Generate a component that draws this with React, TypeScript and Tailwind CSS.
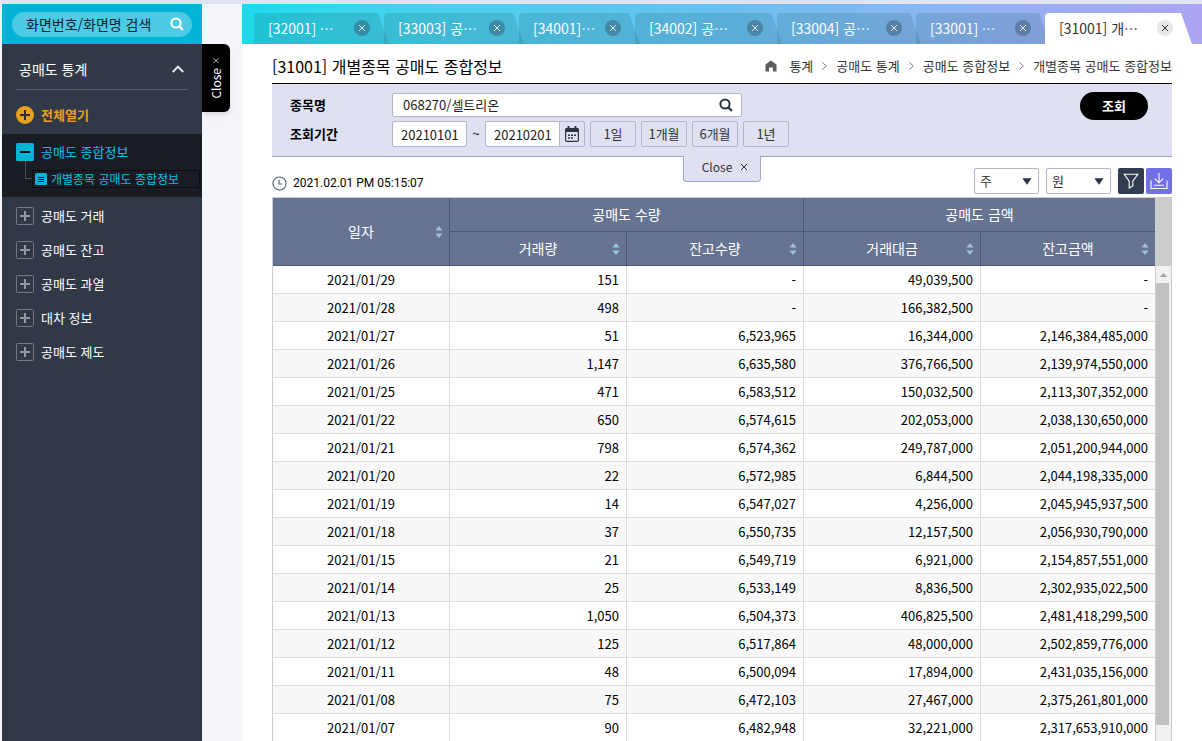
import { useState } from 'react';
import clsx from 'clsx';

interface ScreenTab {
  code: string;
  label: string;
  width: string;
}

const TABS: ScreenTab[] = [
  { code: '32001', label: '[32001] …', width: 'w-[130px]' },
  { code: '33003', label: '[33003] 공…', width: 'w-[135px]' },
  { code: '34001', label: '[34001]…', width: 'w-[116px]' },
  { code: '34002', label: '[34002] 공…', width: 'w-[142px]' },
  { code: '33004', label: '[33004] 공…', width: 'w-[139px]' },
  { code: '33001', label: '[33001] …', width: 'w-[129px]' },
  { code: '31001', label: '[31001] 개…', width: 'w-[142px]' },
];

const MENU = ['공매도 거래', '공매도 잔고', '공매도 과열', '대차 정보', '공매도 제도'];
const CRUMBS = ['통계', '공매도 통계', '공매도 종합정보', '개별종목 공매도 종합정보'];
const PERIODS = ['1일', '1개월', '6개월', '1년'];

const ROWS = [
  ['2021/01/29', '151', '-', '49,039,500', '-'],
  ['2021/01/28', '498', '-', '166,382,500', '-'],
  ['2021/01/27', '51', '6,523,965', '16,344,000', '2,146,384,485,000'],
  ['2021/01/26', '1,147', '6,635,580', '376,766,500', '2,139,974,550,000'],
  ['2021/01/25', '471', '6,583,512', '150,032,500', '2,113,307,352,000'],
  ['2021/01/22', '650', '6,574,615', '202,053,000', '2,038,130,650,000'],
  ['2021/01/21', '798', '6,574,362', '249,787,000', '2,051,200,944,000'],
  ['2021/01/20', '22', '6,572,985', '6,844,500', '2,044,198,335,000'],
  ['2021/01/19', '14', '6,547,027', '4,256,000', '2,045,945,937,500'],
  ['2021/01/18', '37', '6,550,735', '12,157,500', '2,056,930,790,000'],
  ['2021/01/15', '21', '6,549,719', '6,921,000', '2,154,857,551,000'],
  ['2021/01/14', '25', '6,533,149', '8,836,500', '2,302,935,022,500'],
  ['2021/01/13', '1,050', '6,504,373', '406,825,500', '2,481,418,299,500'],
  ['2021/01/12', '125', '6,517,864', '48,000,000', '2,502,859,776,000'],
  ['2021/01/11', '48', '6,500,094', '17,894,000', '2,431,035,156,000'],
  ['2021/01/08', '75', '6,472,103', '27,467,000', '2,375,261,801,000'],
  ['2021/01/07', '90', '6,482,948', '32,221,000', '2,317,653,910,000'],
];

const SearchIcon = ({ className }: { className: string }) => (
  <svg viewBox="0 0 14 14" className={className} fill="none" stroke="currentColor" aria-hidden="true">
    <circle cx="6" cy="6" r="4.6" strokeWidth="2" />
    <path d="M9.4 9.4 L13 13" strokeWidth="2.2" />
  </svg>
);

const CrossIcon = ({ className }: { className: string }) => (
  <svg viewBox="0 0 8 8" className={className} fill="none" stroke="currentColor" aria-hidden="true">
    <path d="M1 1 L7 7 M7 1 L1 7" strokeWidth="1" />
  </svg>
);

const SortIcon = () => (
  <svg viewBox="0 0 8 12" className="absolute right-[6px] top-1/2 h-3 w-2 -translate-y-1/2" fill="#9cc3dc" aria-hidden="true">
    <path d="M4 0 L7.6 4.6 H0.4 Z M4 12 L0.4 7.4 H7.6 Z" />
  </svg>
);

const Sidebar = () => (
  <aside className="ml-0.5 flex w-[200px] shrink-0 flex-col bg-[#323946] text-[13px] text-white">
    <form className="flex h-10 items-center bg-[#00b4d8] px-[10px]" onSubmit={(e) => e.preventDefault()}>
      <div className="flex h-[25px] flex-1 items-center rounded-full bg-[#4dcbe4] pl-[14px] pr-2">
        <input
          aria-label="화면 검색"
          placeholder="화면번호/화면명 검색"
          className="w-0 flex-1 text-sm text-black outline-none placeholder:text-[#123]"
        />
        <button type="submit" aria-label="검색">
          <SearchIcon className="h-[14px] w-[14px] text-white" />
        </button>
      </div>
    </form>

    <button className="mx-[14px] flex h-[46px] items-center justify-between border-b border-[#59606c] pl-[3px] pr-1 pt-1 text-sm">
      공매도 통계
      <svg viewBox="0 0 12 8" className="h-2 w-3" fill="none" stroke="#e8eaee" strokeWidth="2" aria-hidden="true">
        <path d="M0.8 7 L6 1.6 L11.2 7" />
      </svg>
    </button>

    <button className="flex h-11 items-center gap-[7px] px-[14px] pt-[6px] font-bold text-[#eb9f1c]">
      <svg viewBox="0 0 18 18" className="h-[18px] w-[18px]" aria-hidden="true">
        <circle cx="9" cy="9" r="9" fill="#e8a11c" />
        <path d="M9 4 V14 M4 9 H14" stroke="#2c2c2c" strokeWidth="2" />
      </svg>
      전체열기
    </button>

    <div className="h-[63px] bg-[#191d23] text-[#00c0e8]">
      <button className="flex h-9 items-center gap-[7px] px-[14px]">
        <svg viewBox="0 0 18 18" className="h-[18px] w-[18px]" aria-hidden="true">
          <rect width="18" height="18" rx="1.5" fill="#00b4d8" />
          <path d="M4 9 H14" stroke="#0b1014" strokeWidth="2" />
        </svg>
        공매도 종합정보
      </button>
      <div className="flex h-[18px] items-center">
        <span className="-mt-[19px] ml-[23px] h-[18px] w-[7px] border-b border-l border-[#4a4f57]" />
        <a
          href="#31001"
          className="mr-[2px] flex h-[18px] flex-1 items-center gap-1 border border-dotted border-black pl-[2px] text-xs"
        >
          <svg viewBox="0 0 12 12" className="h-3 w-3" aria-hidden="true">
            <rect width="12" height="12" rx="1.5" fill="#00b4d8" />
            <path d="M3 4.5 H9 M3 6.5 H9 M3 8.5 H9" stroke="#14181d" strokeWidth="1" />
          </svg>
          개별종목 공매도 종합정보
        </a>
      </div>
    </div>

    <ul className="mt-[2px]">
      {MENU.map((name) => (
        <li key={name}>
          <button className="flex h-[34px] w-full items-center gap-[7px] px-[14px]">
            <svg viewBox="0 0 18 18" className="h-[18px] w-[18px]" fill="none" aria-hidden="true">
              <rect x="0.5" y="0.5" width="17" height="17" rx="1" stroke="#737984" />
              <path d="M9 4 V14 M4 9 H14" stroke="#9298a3" strokeWidth="2" />
            </svg>
            {name}
          </button>
        </li>
      ))}
    </ul>
  </aside>
);

const TabBar = ({ active, onSelect }: { active: string; onSelect: (code: string) => void }) => (
  <nav className="flex h-10 shrink-0 items-end bg-linear-to-r from-[#1adbeb] via-[#68c1f0] to-[#aba4f2] pl-3">
    {TABS.map((tab) => {
      const isActive = tab.code === active;
      return (
        <div key={tab.code} className={clsx('shrink-0', tab.width)}>
          <div
            className={clsx(
              '-mr-[5px] flex h-[31px] items-center justify-between rounded-tl-sm pl-[14px] pr-[19px] [clip-path:polygon(0_0,calc(100%-11px)_0,100%_100%,0_100%)]',
              isActive ? 'bg-white text-[#333]' : 'bg-[#1d6478]/20 text-white',
            )}
          >
            <button className="whitespace-nowrap pb-[2px] text-sm" onClick={() => onSelect(tab.code)}>
              {tab.label}
            </button>
            <button
              aria-label={`${tab.code} 닫기`}
              className={clsx(
                'mb-px flex h-4 w-4 shrink-0 items-center justify-center rounded-full',
                isActive ? 'bg-[#e6e6e6] text-[#333]' : 'bg-[#33475c]/40 text-white/80',
              )}
            >
              <CrossIcon className="h-2 w-2" />
            </button>
          </div>
        </div>
      );
    })}
  </nav>
);

const SearchPanel = () => (
  <form
    className="relative flex h-[74px] items-start justify-between border-b border-t border-b-[#a0a4c8] border-t-black bg-[#dfe1f2] pl-[18px] pr-6 pt-[9px] text-[13px]"
    onSubmit={(e) => e.preventDefault()}
  >
    <div className="flex flex-col gap-1">
      <div className="flex items-center">
        <label htmlFor="stock" className="w-[102px] font-bold">종목명</label>
        <div className="flex h-6 w-[350px] items-center rounded-xs border border-[#b4b5c6] bg-white pl-[10px] pr-2">
          <input id="stock" defaultValue="068270/셀트리온" className="w-0 flex-1 text-[#222] outline-none" />
          <button type="button" aria-label="종목 찾기">
            <SearchIcon className="h-[14px] w-[14px] text-[#2d3544]" />
          </button>
        </div>
      </div>
      <div className="flex h-[26px] items-center">
        <label htmlFor="from" className="w-[102px] font-bold">조회기간</label>
        <input
          id="from"
          defaultValue="20210101"
          className="h-[26px] w-[75px] rounded-xs border border-[#b4b5c6] bg-white pl-2 text-[#222]"
        />
        <span className="w-[18px] text-center">~</span>
        <input
          aria-label="종료일"
          defaultValue="20210201"
          className="h-[26px] w-[75px] rounded-l-xs border border-[#b4b5c6] bg-white pl-2 text-[#222]"
        />
        <button
          type="button"
          aria-label="달력"
          className="-ml-px flex h-[26px] w-[26px] items-center justify-center rounded-r-xs border border-[#b4b5c6]"
        >
          <svg viewBox="0 0 14 16" className="h-4 w-[14px]" fill="none" aria-hidden="true">
            <rect x="0.6" y="2.6" width="12.8" height="12.8" rx="1.2" stroke="#2d3544" strokeWidth="1.2" />
            <path d="M0.6 2.6 H13.4 V6 H0.6 Z" fill="#2d3544" />
            <path d="M3.5 0 V3 M10.5 0 V3" stroke="#2d3544" strokeWidth="2" />
            <path d="M6 9.2 H8 M9 9.2 H11 M3 9.2 H5 M3 12 H5 M6 12 H8" stroke="#2d3544" strokeWidth="1.6" />
          </svg>
        </button>
        <div className="ml-[5px] flex gap-[5px]">
          {PERIODS.map((period) => (
            <button key={period} type="button" className="h-[26px] w-[46px] rounded-xs border border-[#b4b5c6] text-[#333]">
              {period}
            </button>
          ))}
        </div>
      </div>
    </div>
    <button type="submit" className="-mt-px h-7 w-[68px] rounded-full bg-black font-bold text-white">
      조회
    </button>
    <button
      type="button"
      className="absolute left-1/2 top-[72px] flex h-[26px] w-[78px] -translate-x-1/2 items-center justify-center gap-2 rounded-b border border-t-0 border-[#a0a4c8] bg-[#dfe1f2] pb-1 pl-[6px] text-xs text-[#333]"
    >
      Close
      <CrossIcon className="h-2 w-2" />
    </button>
  </form>
);

const UnitSelect = ({ label, value }: { label: string; value: string }) => (
  <div className="relative">
    <select
      aria-label={label}
      className="block h-[26px] w-[65px] appearance-none rounded-xs border border-[#b4b5c6] bg-white pl-[5px] text-[13px] text-[#333]"
    >
      <option>{value}</option>
    </select>
    <svg viewBox="0 0 10 7" className="pointer-events-none absolute right-[7px] top-[10px] h-[7px] w-[10px]" aria-hidden="true">
      <path d="M0.4 0.2 H9.6 L5 6.8 Z" fill="#2d3544" />
    </svg>
  </div>
);

const Toolbar = () => (
  <div className="flex h-10 shrink-0 items-end justify-between pb-[3px]">
    <div className="flex h-[26px] items-center gap-[6px] pt-1 font-[Roboto,sans-serif] text-xs">
      <svg viewBox="0 0 16 16" className="h-[15px] w-[15px]" fill="none" stroke="#566078" aria-hidden="true">
        <circle cx="8" cy="8" r="7" strokeWidth="1.2" />
        <path d="M7.5 4 V8.5 H11" strokeWidth="1.2" />
      </svg>
      2021.02.01 PM 05:15:07
    </div>
    <div className="flex">
      <div className="mr-[7px] flex gap-[7px]">
        <UnitSelect label="수량 단위" value="주" />
        <UnitSelect label="금액 단위" value="원" />
      </div>
      <button aria-label="필터" className="mr-[2px] flex h-[26px] w-[26px] items-center justify-center rounded-xs bg-[#323c50]">
        <svg viewBox="0 0 16 16" className="h-4 w-4" fill="none" stroke="#fff" strokeWidth="1.1" aria-hidden="true">
          <path d="M1.2 1.2 H14.8 L9.8 8.2 V13 L6.2 15 V8.2 Z" />
        </svg>
      </button>
      <button aria-label="다운로드" className="flex h-[26px] w-[26px] items-center justify-center rounded-xs bg-[#7070e6]">
        <svg viewBox="0 0 18 18" className="h-[18px] w-[18px]" fill="none" stroke="#fff" strokeWidth="1.1" aria-hidden="true">
          <path d="M9 1 V10.5 M4.8 6.6 L9 10.8 L13.2 6.6 M4 13.2 H14 M1 8.5 V16.5 H17 V8.5" />
        </svg>
      </button>
    </div>
  </div>
);

const DataGrid = () => (
  <div className="flex min-h-0 flex-1 overflow-hidden border-x border-t border-[#ccc]">
    <div className="min-w-0 flex-1">
      <table className="w-full table-fixed border-separate border-spacing-0 text-[13px]">
        <colgroup>
          <col className="w-[177px]" />
          <col className="w-[177px]" />
          <col className="w-[177px]" />
          <col className="w-[177px]" />
          <col />
        </colgroup>
        <thead className="bg-[#667391] text-sm text-white [&_th]:relative [&_th]:h-[34px] [&_th]:border-b [&_th]:border-r [&_th]:border-[#49587a] [&_th]:p-0 [&_th]:pb-px [&_th]:font-normal">
          <tr>
            <th rowSpan={2}>일자<SortIcon /></th>
            <th colSpan={2}>공매도 수량</th>
            <th colSpan={2} className="border-r-0!">공매도 금액</th>
          </tr>
          <tr>
            <th>거래량<SortIcon /></th>
            <th>잔고수량<SortIcon /></th>
            <th>거래대금<SortIcon /></th>
            <th className="border-r-0!">잔고금액<SortIcon /></th>
          </tr>
        </thead>
        <tbody>
          {ROWS.map((row) => (
            <tr key={row[0]} className="even:bg-[#f8f8f8]">
              {row.map((cell, i) => (
                <td
                  key={i}
                  className={clsx(
                    'h-7 border-b border-r border-[#dcdcdc] p-0 leading-5 last:border-r-0',
                    i === 0 ? 'text-center' : 'pr-[7px] text-right',
                  )}
                >
                  {cell}
                </td>
              ))}
            </tr>
          ))}
        </tbody>
      </table>
    </div>
    <div className="flex w-4 shrink-0 flex-col border-l border-[#ccc] bg-[#f1f1f1]">
      <div className="h-[68px] bg-[#ccc]" />
      <div className="flex h-[17px] items-center justify-center">
        <svg viewBox="0 0 7 4" className="h-1 w-[7px]" fill="#a3a3a3" aria-hidden="true">
          <path d="M3.5 0 L7 4 H0 Z" />
        </svg>
      </div>
      <div className="mb-4 mr-[2px] flex-1 bg-[#c1c1c1]" />
    </div>
  </div>
);

const App = () => {
  const [active, setActive] = useState('31001');

  return (
    <div
      lang="ko"
      className="flex h-screen overflow-hidden border-t-4 border-[#e0e3f2] bg-[#f5f6fc] font-['Noto_Sans_CJK_KR',sans-serif] text-black"
    >
      <Sidebar />
      <div className="w-10 shrink-0 pt-10">
        <button className="flex h-[68px] w-7 items-center justify-center rounded-r-md bg-black text-white shadow-md">
          <span className="flex rotate-180 items-center gap-1 text-xs leading-4 [writing-mode:vertical-rl]">
            Close
            <CrossIcon className="h-[6px] w-[6px]" />
          </span>
        </button>
      </div>
      <div className="flex min-w-0 flex-1 flex-col bg-white">
        <TabBar active={active} onSelect={setActive} />
        <main className="flex min-h-0 flex-1 flex-col px-[30px]">
          <div className="flex h-[39px] shrink-0 items-center justify-between pt-1">
            <h1 className="text-base">[31001] 개별종목 공매도 종합정보</h1>
            <ol className="flex items-center text-[13px] text-[#333]">
              <li className="mr-3">
                <a href="#home" aria-label="홈">
                  <svg viewBox="0 0 12 12" className="h-3 w-3" fill="#5c5c5c" aria-hidden="true">
                    <path d="M6 0.5 L11.5 4.5 V11.5 H8 V7.5 H4 V11.5 H0.5 V4.5 Z" />
                  </svg>
                </a>
              </li>
              {CRUMBS.map((crumb, i) => (
                <li key={crumb} className="flex items-center">
                  {i > 0 && (
                    <svg viewBox="0 0 5 8" className="mx-[9px] h-2 w-[5px]" fill="none" stroke="#777" aria-hidden="true">
                      <path d="M0.5 0.5 L4.3 4 L0.5 7.5" />
                    </svg>
                  )}
                  {crumb}
                </li>
              ))}
            </ol>
          </div>
          <SearchPanel />
          <Toolbar />
          <DataGrid />
        </main>
      </div>
    </div>
  );
};

export default App;
